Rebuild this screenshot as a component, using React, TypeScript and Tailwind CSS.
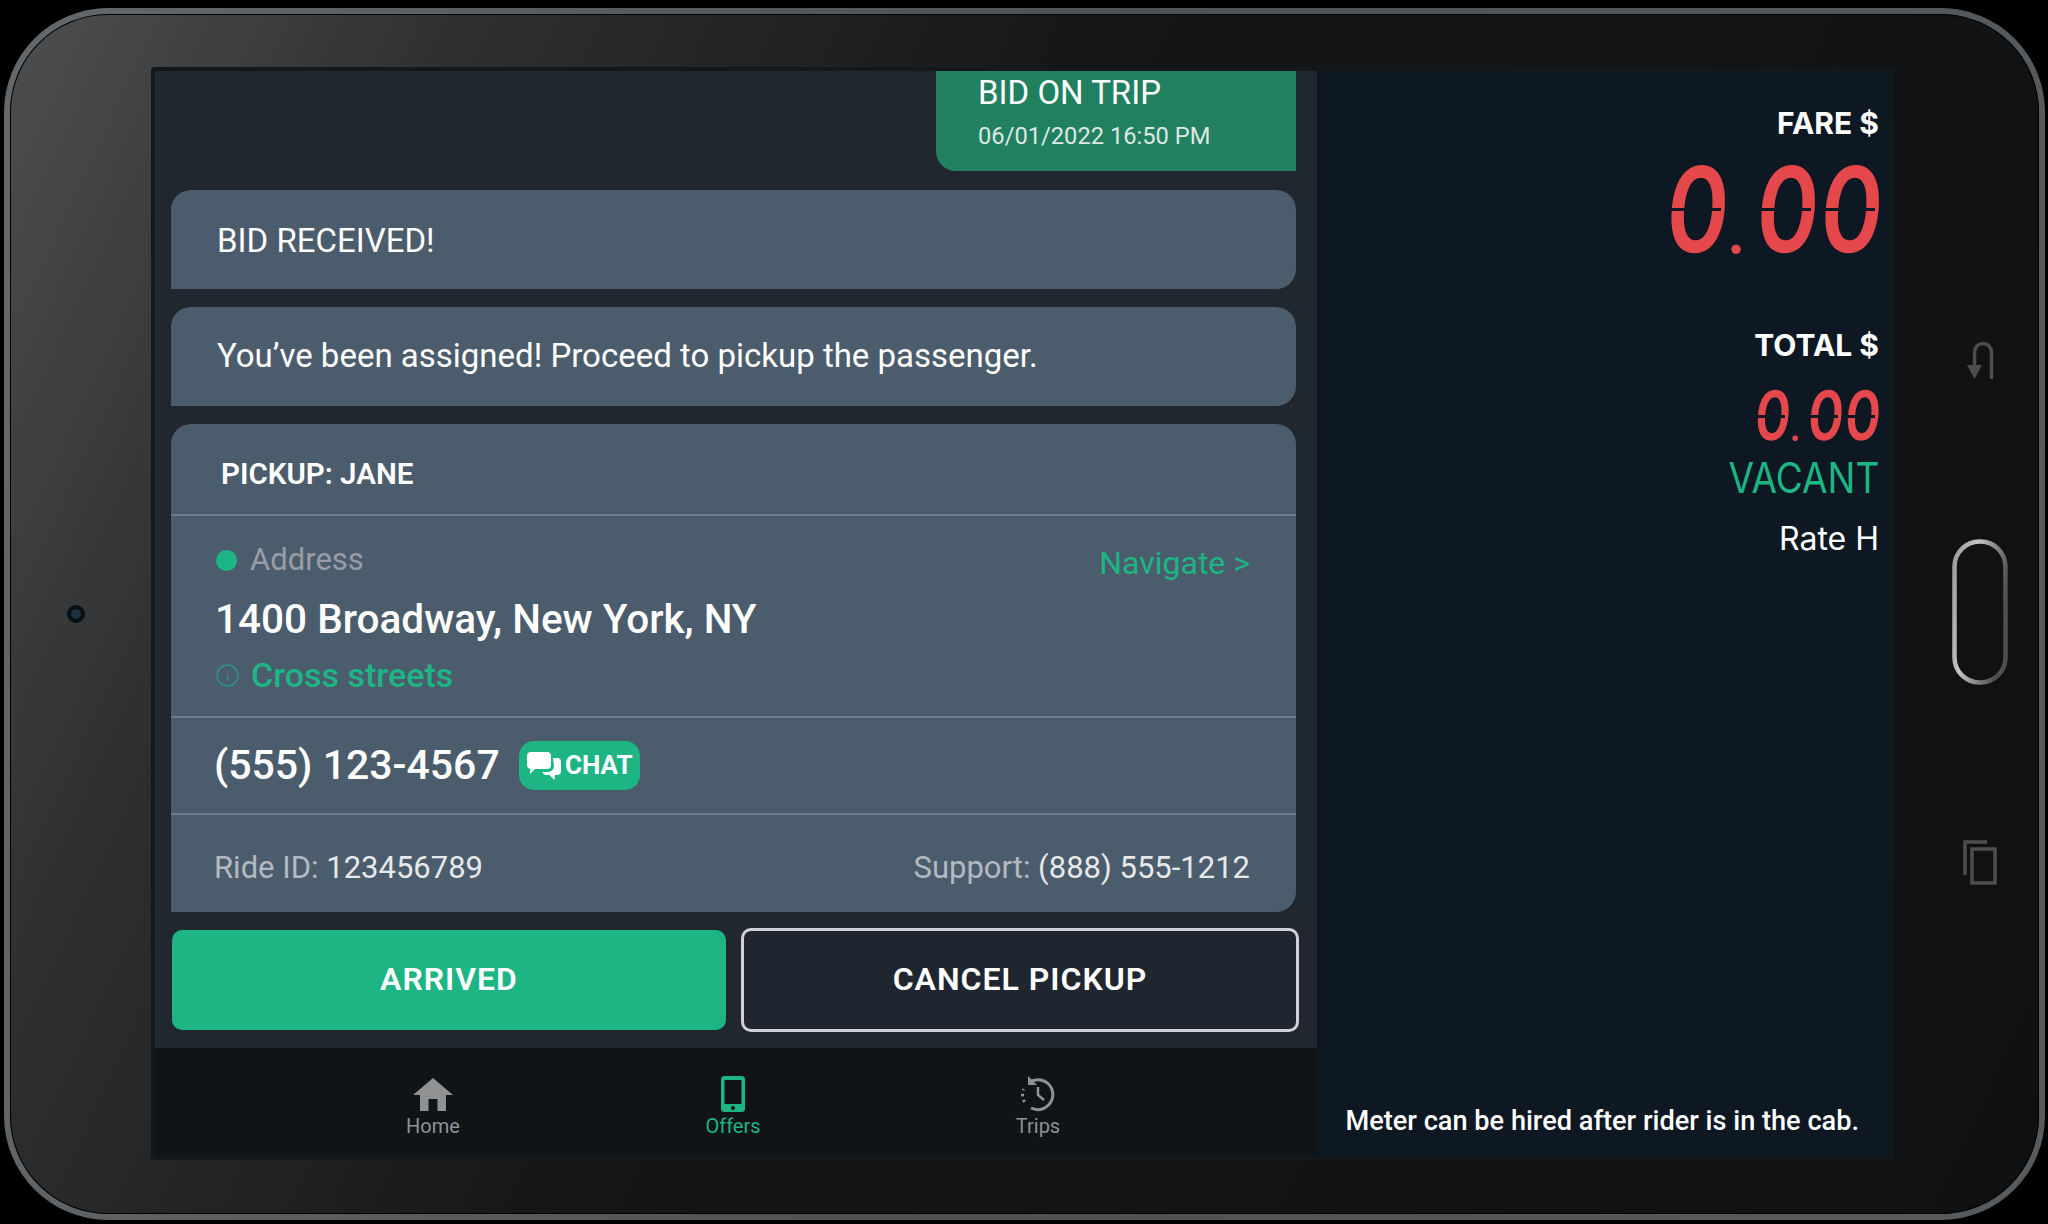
import React from "react";
import { Info } from "lucide-react";

// ─── Icons ───────────────────────────────────────────────────────────────────

function ChatIcon() {
  return (
    <svg width="36" height="30" viewBox="0 0 36 30" fill="none" aria-hidden="true">
      <path d="M5 1h16a4 4 0 0 1 4 4v9a4 4 0 0 1-4 4H9l-5 5 .5-5A4 4 0 0 1 1 14V5a4 4 0 0 1 4-4z" fill="#fff" />
      <path d="M27 7h4a4 4 0 0 1 4 4v9a4 4 0 0 1-4 4h-2l-.5 5-5-5h-3a4 4 0 0 1-4-3h6a6 6 0 0 0 5.500-6z" fill="#fff" />
    </svg>
  );
}

function HomeIcon() {
  return (
    <svg width="40" height="33" viewBox="0 0 40 33" aria-hidden="true">
      <path d="M20 0 40 17H33V33H24.500V21H15.500V33H7V17H0z" fill="#8f9193" />
    </svg>
  );
}

function PhoneIcon() {
  return (
    <svg width="24" height="36" viewBox="0 0 24 36" aria-hidden="true">
      <rect x="0" y="0" width="24" height="36" rx="3.500" fill="#1db584" />
      <rect x="3.500" y="4" width="17" height="24" fill="#111417" />
      <circle cx="12" cy="32" r="2" fill="#111417" />
    </svg>
  );
}

function TripsIcon() {
  return (
    <svg width="38" height="38" viewBox="0 0 38 38" fill="none" stroke="#8f9193" strokeWidth="3" aria-hidden="true">
      <path d="M10 7.500A15 15 0 1 1 12 33" />
      <path d="M5.500 27A15 15 0 0 1 4.500 14" strokeDasharray="2.500 3.500" />
      <path d="M9 1v9h9z" fill="#8f9193" stroke="none" />
      <path d="M19 12v8l6 5" strokeWidth="2.500" />
    </svg>
  );
}

function BackIcon() {
  return (
    <svg width="28" height="38" viewBox="0 0 28 38" fill="none" aria-hidden="true">
      <path d="M25.500 38V11a8.500 8.500 0 0 0-17 0v13" stroke="#4c4d4f" strokeWidth="3.500" />
      <path d="M1 24h15l-7.500 14z" fill="#4c4d4f" />
    </svg>
  );
}

function PagesIcon() {
  return (
    <svg width="34" height="45" viewBox="0 0 34 45" fill="none" stroke="#4c4d4f" strokeWidth="3.500" aria-hidden="true">
      <path d="M2 35V2h22" />
      <rect x="9" y="9" width="23" height="34" />
    </svg>
  );
}

function HomeButton() {
  return (
    <svg width="56" height="146" viewBox="0 0 56 146" fill="none" aria-hidden="true">
      <defs>
        <linearGradient id="pill" x1="0" y1="0" x2="1" y2="0.4">
          <stop offset="0" stopColor="#9a9a9a" />
          <stop offset="0.4" stopColor="#c4c4c4" />
          <stop offset="1" stopColor="#4f4f4f" />
        </linearGradient>
      </defs>
      <rect x="2.500" y="2.500" width="51" height="141" rx="25" stroke="url(#pill)" strokeWidth="4.500" />
    </svg>
  );
}

// ─── Meter ───────────────────────────────────────────────────────────────────

function Digit({ big }: { big: boolean }) {
  return (
    <span className={big ? "relative block w-[60px] h-[90px]" : "relative block w-[33px] h-[53px]"}>
      <span
        className={`block text-center origin-center -skew-x-6 font-semibold ${
          big
            ? "h-[90px] leading-[90px] text-[118px] scale-x-[.8]"
            : "h-[53px] leading-[53px] text-[68px] scale-x-[.8]"
        }`}
      >
        0
      </span>
      {/* segment break of the display */}
      <span className="absolute left-0 right-0 top-[calc(50%-1px)] h-[3px] bg-[#0d1823]" />
    </span>
  );
}

function Amount({ big }: { big: boolean }) {
  return (
    <div className="flex gap-[4px] mr-[4px] text-[#e5484a] font-[Inter,sans-serif]">
      <Digit big={big} />
      <span className={`block text-center font-semibold ${big ? "w-[22px] h-[90px] leading-[90px] text-[60px] translate-y-[22px]" : "w-[12px] h-[53px] leading-[53px] text-[36px] translate-y-[13px]"}`}>
        .
      </span>
      <Digit big={big} />
      <Digit big={big} />
    </div>
  );
}

// ─── Trip panel ──────────────────────────────────────────────────────────────

function Bubble({ children, className }: { children: React.ReactNode; className?: string }) {
  return (
    <div className={`h-[99px] shrink-0 bg-[#4b5c6c] rounded-t-[20px] rounded-br-[20px] flex items-center pl-[46px] text-[33px] text-white ${className ?? ""}`}>
      {children}
    </div>
  );
}

function NavItem({ label, active, icon, className }: { label: string; active?: boolean; icon: React.ReactNode; className?: string }) {
  return (
    <div className={`w-[300px] flex flex-col items-center ${className ?? ""}`}>
      <div className="h-[38px] flex items-center">{icon}</div>
      <span className={`text-[20px] leading-[24px] mt-[1px] ${active ? "text-[#1db584]" : "text-[#8f9193]"}`}>{label}</span>
    </div>
  );
}

export default function App() {
  return (
    <div className="w-[2048px] h-[1224px] bg-black pl-[4px] pt-[8px] pr-[3px] pb-[4px] font-[Roboto,sans-serif]">
      <div className="w-full h-full rounded-[104px] p-[6px] bg-[linear-gradient(100deg,#64686a,#4f5254_50%,#585b5d)]">
        <div className="relative w-full h-full rounded-[98px] flex shadow-[inset_0_0_0_1px_#000] bg-[linear-gradient(115deg,#4d4e50_0%,#2e2f31_18%,#151617_42%,#0f1011_100%)]">
          <div className="w-[141px] shrink-0 flex items-center pl-[57px]">
            <div className="w-[18px] h-[18px] rounded-full bg-[#1c3040] border-[4px] border-[#0a0f14]" />
          </div>

          {/* screen */}
          <div className="w-[1743px] h-[1093px] mt-[53px] shrink-0 flex border-[4px] border-[#14181b] rounded-[4px] overflow-hidden">
            <div className="w-[1162px] shrink-0 flex flex-col bg-[#20272e]">
              <div className="flex-1 flex flex-col pl-[16px] pr-[21px]">
                <div className="self-end w-[360px] h-[100px] bg-[#20805f] rounded-bl-[20px] pl-[42px] flex flex-col text-white">
                  <span className="text-[33px] leading-[40px] mt-[2px]">BID ON TRIP</span>
                  <span className="text-[23.700px] leading-[30px] mt-[8px] text-[#dfe7e4]">06/01/2022 16:50 PM</span>
                </div>
                <div className="mt-[19px]"><Bubble className="pt-[2px]">BID RECEIVED!</Bubble></div>
                <div className="mt-[18px]"><Bubble className="pb-[2px]">You’ve been assigned! Proceed to pickup the passenger.</Bubble></div>

                <div className="mt-[18px] h-[488px] shrink-0 bg-[#4b5c6c] rounded-t-[20px] rounded-br-[20px] flex flex-col text-white">
                  <div className="h-[90px] flex items-center pl-[50px] pt-[10px] text-[29.500px] font-semibold">PICKUP: JANE</div>
                  <div className="h-[204px] border-y-2 border-[#6b7c8f] pl-[45px] pr-[46px] pt-[25px]">
                    <div className="h-[38px] flex items-center justify-between">
                      <div className="flex items-center gap-[13px]">
                        <span className="w-[21px] h-[21px] rounded-full bg-[#1db584]" />
                        <span className="text-[31px] text-[#989da5]">Address</span>
                      </div>
                      <span className="text-[32px] text-[#1db584] mt-[6px]">Navigate &gt;</span>
                    </div>
                    <div className="h-[50px] mt-[15px] flex items-center text-[40.500px] font-medium -ml-[1px]">1400 Broadway, New York, NY</div>
                    <div className="h-[42px] mt-[10px] flex items-center gap-[11px] text-[34px] font-medium text-[#1db584] -ml-[1px]">
                      <Info size={25} strokeWidth={1.5} className="text-[#2b9488]" />
                      Cross streets
                    </div>
                  </div>
                  <div className="h-[97px] border-b-2 border-[#6b7c8f] pl-[43px] pr-[46px] flex items-center gap-[19px]">
                    <span className="text-[41px] font-medium">(555) 123-4567</span>
                    <span className="h-[49px] w-[121px] rounded-[15px] bg-[#1db584] flex items-center justify-center gap-[3px] text-[26px] font-bold">
                      <ChatIcon />
                      CHAT
                    </span>
                  </div>
                  <div className="flex-1 flex items-center justify-between pl-[43px] pr-[46px] pt-[10px] text-[31px] text-[#b3b9c1]">
                    <span>Ride ID: <span className="text-[#e6e8ea]">123456789</span></span>
                    <span>Support: <span className="text-[#e6e8ea]">(888) 555-1212</span></span>
                  </div>
                </div>

                <div className="mt-[16px] ml-[1px] flex gap-[15px] text-white text-[32px] font-semibold tracking-[1px]">
                  <button type="button" className="w-[554px] shrink-0 h-[100px] mt-[2px] pb-[2px] rounded-[10px] bg-[#1db584]">ARRIVED</button>
                  <button type="button" className="w-[558px] shrink-0 h-[104px] pb-[2px] rounded-[10px] border-[3px] border-[#ced2da] bg-[#20262f]">CANCEL PICKUP</button>
                </div>
              </div>

              <div className="h-[108px] shrink-0 bg-[#111417] flex pl-[128px] pt-[27px]">
                <NavItem label="Home" icon={<HomeIcon />} />
                <NavItem label="Offers" active icon={<PhoneIcon />} />
                <NavItem label="Trips" icon={<TripsIcon />} className="ml-[5px]" />
              </div>
            </div>

            <div className="flex-1 bg-[#0d1823] flex flex-col items-end pr-[11px] text-white font-[Inter,sans-serif]">
              <span className="text-[30px] leading-[36px] font-bold mt-[34px]">FARE $</span>
              <div className="mt-[23px]"><Amount big /></div>
              <span className="text-[30px] leading-[36px] font-bold mt-[73px]">TOTAL $</span>
              <div className="mt-[26px]"><Amount big={false} /></div>
              <span className="block text-[42px] leading-[40px] text-[#1db584] origin-right scale-x-[.88] mt-[16px] whitespace-nowrap">VACANT</span>
              <span className="text-[32px] leading-[36px] mt-[23px]">Rate H</span>
              <span className="mt-auto mb-[17px] mr-[20px] text-[27.150px] leading-[36px] font-medium font-[Roboto,sans-serif]">Meter can be hired after rider is in the cab.</span>
            </div>
          </div>

          <div className="flex-1 flex flex-col items-center ml-[26px]">
            <div className="mt-[327px] h-[38px]"><BackIcon /></div>
            <div className="mt-[160px] h-[146px]"><HomeButton /></div>
            <div className="mt-[155px]"><PagesIcon /></div>
          </div>
        </div>
      </div>
    </div>
  );
}
